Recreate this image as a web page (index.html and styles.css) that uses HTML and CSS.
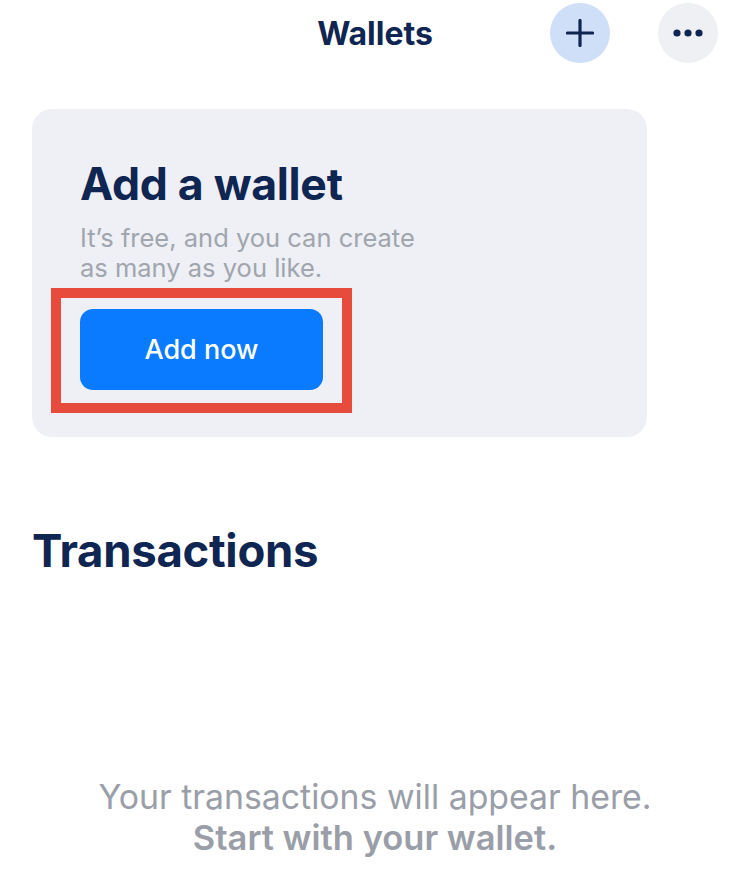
FILE: index.html
```html
<!DOCTYPE html>
<html lang="en">
<head>
<meta charset="utf-8">
<title>Wallets</title>
<link rel="stylesheet" href="styles.css">
</head>
<body>
<div class="screen">
  <header class="topbar">
    <div class="spacer"></div>
    <h1 class="title">Wallets</h1>
    <div class="actions">
      <button class="icon-btn add" aria-label="Add">
        <svg width="28" height="28" viewBox="0 0 28 28"><path d="M14 1.5v25M1.5 14h25" stroke="#0f2552" stroke-width="3.2" stroke-linecap="round" fill="none"/></svg>
      </button>
      <button class="icon-btn more" aria-label="More">
        <svg width="30" height="8" viewBox="0 0 30 8"><circle cx="4" cy="4" r="3.6" fill="#0f2552"/><circle cx="15" cy="4" r="3.6" fill="#0f2552"/><circle cx="26" cy="4" r="3.6" fill="#0f2552"/></svg>
      </button>
    </div>
  </header>

  <section class="card">
    <h2 class="card-title">Add a wallet</h2>
    <p class="card-text">It’s free, and you can create<br>as many as you like.</p>
    <div class="highlight">
      <button class="primary">Add now</button>
    </div>
  </section>

  <h2 class="section-title">Transactions</h2>

  <div class="empty">
    <p class="empty-line">Your transactions will appear here.</p>
    <p class="empty-line strong">Start with your wallet.</p>
  </div>
</div>
</body>
</html>
```

FILE: styles.css
```css
* { box-sizing: border-box; }
html, body { margin: 0; padding: 0; background: #ffffff; }
body {
  font-family: Inter, "Noto Sans", "Liberation Sans", sans-serif;
  color: #0f2552;
}
.screen { width: 750px; height: 891px; overflow: hidden; }

.topbar {
  display: grid;
  grid-template-columns: 1fr auto 1fr;
  align-items: center;
  height: 66px;
  padding: 0 32px;
}
.title {
  margin: 0;
  font-size: 32px;
  font-weight: 700;
  letter-spacing: 0;
}
.actions {
  display: flex;
  justify-content: flex-end;
  gap: 48px;
}
.icon-btn {
  width: 60px;
  height: 60px;
  border-radius: 50%;
  border: 0;
  padding: 0;
  display: flex;
  align-items: center;
  justify-content: center;
}
.icon-btn.add { background: #cfdff8; }
.icon-btn.more { background: #eef0f4; }

.card {
  margin: 43px 0 0 32px;
  width: 615px;
  height: 328px;
  background: #eef0f5;
  border-radius: 20px;
  padding: 49px 48px 0 48px;
}
.card-title {
  margin: 0;
  font-size: 44.6px;
  font-weight: 700;
  line-height: 52px;
  letter-spacing: -0.3px;
}
.card-text {
  margin: 13px 0 0;
  font-size: 25.5px;
  line-height: 30px;
  color: #a0a5ae;
  font-weight: 400;
}
.highlight {
  display: inline-block;
  margin: 5px 0 0 -29px;
  border: 10px solid #e64b3c;
  padding: 11px 19px 13px;
}
.primary {
  display: block;
  width: 243px;
  height: 81px;
  border: 0;
  border-radius: 13px;
  background: #0a7bff;
  color: #ffffff;
  font-family: inherit;
  font-size: 27px;
  font-weight: 500;
}

.section-title {
  margin: 86px 0 0 32px;
  font-size: 45.5px;
  line-height: 56px;
  font-weight: 700;
  letter-spacing: -0.3px;
}

.empty {
  margin-top: 197px;
  text-align: center;
  color: #9a9ea8;
}
.empty-line {
  margin: 0;
  font-size: 33.8px;
  line-height: 41px;
  font-weight: 400;
}
.empty-line.strong { font-weight: 600; font-size: 34.5px; }
```
